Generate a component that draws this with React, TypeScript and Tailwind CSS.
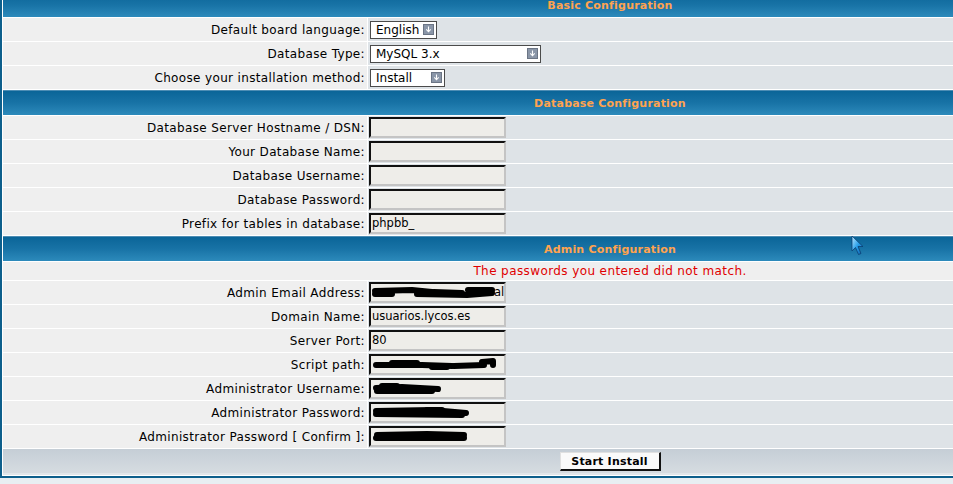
import React from "react";

const font = { fontFamily: '"DejaVu Sans", Verdana, sans-serif' };

function Header({ children }: { children: React.ReactNode }) {
  return (
    <div className="h-[25px] flex items-center justify-center pt-[3px] bg-gradient-to-b from-[#0a6598] via-[#1873a6] to-[#2c8abb] border-t border-[#4d8db4]">
      <span className="text-[11px] font-bold text-[#ffa34f] tracking-[0.2px]">{children}</span>
    </div>
  );
}

function Row({ label, children }: { label: string; children: React.ReactNode }) {
  return (
    <div className="grid grid-cols-[364px_1fr] gap-px h-[23px]">
      <div className="bg-[#efefef] flex items-center justify-end pr-[2px] text-[12px] text-black whitespace-nowrap tracking-[0.35px]">
        {label}
      </div>
      <div className="bg-[#dee3e7] flex items-center pl-[1px]">{children}</div>
    </div>
  );
}

function Arrow() {
  return (
    <div className="w-[11px] h-[11px] bg-[#8a96a8] border border-[#6b7585] flex items-center justify-center">
      <svg width="7" height="7" viewBox="0 0 7 7">
        <path d="M3.5 0.5 V5.5 M1.3 3.4 L3.5 5.8 L5.7 3.4" stroke="#ffffff" strokeWidth="1.1" fill="none" />
      </svg>
    </div>
  );
}

function Select({ value, width }: { value: string; width: string }) {
  return (
    <div className={`ml-px h-[18px] bg-white border border-[#4b4b4b] flex items-center justify-between pl-[5px] pr-[2px] ${width}`}>
      <span className="text-[12px] text-black leading-none">{value}</span>
      <Arrow />
    </div>
  );
}

function Input({ value, children }: { value?: string; children?: React.ReactNode }) {
  return (
    <div className="w-[137px] h-[21px] bg-[#eeede9] border-2 border-t-[#111111] border-l-[#111111] border-b-[#c4c4c4] border-r-[#c4c4c4] flex items-center pl-[1px] overflow-hidden">
      {value && <span className="text-[11.5px] text-black leading-none">{value}</span>}
      {children}
    </div>
  );
}

function Scribble({ w, strokes }: { w: number; strokes: string[] }) {
  return (
    <svg width={w} height="15" viewBox={`0 0 ${w} 15`} className="shrink-0">
      {strokes.map((d, i) => (
        <path key={i} d={d} stroke="#000" strokeWidth="6" strokeLinecap="round" strokeLinejoin="round" fill="none" />
      ))}
    </svg>
  );
}

export default function App() {
  return (
    <div className="w-[953px] h-[484px] overflow-hidden bg-[#e8eef2] relative" style={font}>
      <div className="mt-[-11px] w-[1220px] border-2 border-[#0d5f8c] bg-white p-px flex flex-col gap-px">
        <Header>Basic Configuration</Header>
        <Row label="Default board language:">
          <Select value="English" width="w-[67px]" />
        </Row>
        <Row label="Database Type:">
          <Select value="MySQL 3.x" width="w-[171px]" />
        </Row>
        <Row label="Choose your installation method:">
          <Select value="Install" width="w-[75px]" />
        </Row>
        <Header>Database Configuration</Header>
        <Row label="Database Server Hostname / DSN:">
          <Input />
        </Row>
        <Row label="Your Database Name:">
          <Input />
        </Row>
        <Row label="Database Username:">
          <Input />
        </Row>
        <Row label="Database Password:">
          <Input />
        </Row>
        <Row label="Prefix for tables in database:">
          <Input value="phpbb_" />
        </Row>
        <Header>Admin Configuration</Header>
        <div className="h-[18px] bg-[#efefef] flex items-center justify-center">
          <span className="text-[12px] text-[#e00000] tracking-[0.4px]">The passwords you entered did not match.</span>
        </div>
        <Row label="Admin Email Address:">
          <Input>
            <Scribble w={124} strokes={["M3 6 L40 5 L60 7", "M3 9 L20 9", "M45 9 L95 10 L120 8", "M96 5 L120 5", "M62 7 L90 8"]} />
            <span className="text-[11.5px] text-black leading-none -ml-[2px]">al</span>
          </Input>
        </Row>
        <Row label="Domain Name:">
          <Input value="usuarios.lycos.es" />
        </Row>
        <Row label="Server Port:">
          <Input value="80" />
        </Row>
        <Row label="Script path:">
          <Input>
            <Scribble w={126} strokes={["M4 8 L50 8 L80 9", "M20 6 L45 6", "M82 9 L112 8", "M110 5 L121 4 L121 8", "M60 10 L75 10"]} />
          </Input>
        </Row>
        <Row label="Administrator Username:">
          <Input>
            <Scribble w={70} strokes={["M4 7 L30 6 L66 8", "M5 10 L60 10", "M10 5 L25 5"]} />
          </Input>
        </Row>
        <Row label="Administrator Password:">
          <Input>
            <Scribble w={98} strokes={["M4 6 L60 5 L94 8", "M4 9 L90 10", "M55 5 L70 5"]} />
          </Input>
        </Row>
        <Row label="Administrator Password [ Confirm ]:">
          <Input>
            <Scribble w={96} strokes={["M5 6 L55 5 L92 6", "M4 9 L92 9"]} />
          </Input>
        </Row>
        <div className="h-[26px] pt-[1px] bg-gradient-to-b from-[#c5ced6] to-[#d6dce1] border-b-2 border-[#e1e6ea] flex items-center justify-center">
          <button className="w-[101px] h-[19px] bg-[#fafafa] border border-t-[#e0e0e0] border-l-[#e0e0e0] border-b-[#111] border-r-[#111] border-b-2 border-r-2 text-[11px] font-bold text-black leading-none tracking-[0.2px]">
            Start Install
          </button>
        </div>
      </div>
      <svg className="absolute left-[851px] top-[235px]" width="16" height="22" viewBox="0 0 16 22">
        <defs>
          <linearGradient id="cg" x1="0" y1="0" x2="1" y2="1">
            <stop offset="0" stopColor="#bfe8ff" />
            <stop offset="0.5" stopColor="#2aa0ea" />
            <stop offset="1" stopColor="#0a5aa8" />
          </linearGradient>
        </defs>
        <path d="M1 1 L1 16 L4.5 12.5 L7.5 19.5 L10 18.5 L7 11.5 L12 11.5 Z" fill="url(#cg)" stroke="#0a3f73" strokeWidth="0.8" />
      </svg>
    </div>
  );
}
